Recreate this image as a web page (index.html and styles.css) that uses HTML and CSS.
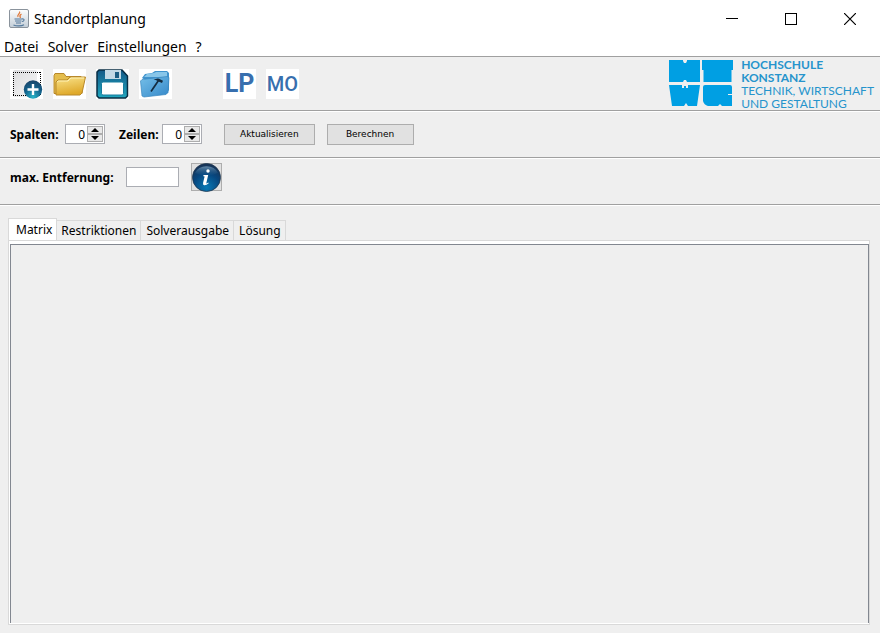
FILE: index.html
```
<!DOCTYPE html>
<html lang="de">
<head>
<meta charset="utf-8">
<title>Standortplanung</title>
<link rel="stylesheet" href="styles.css">
</head>
<body>
<div class="window">
  <header class="titlebar">
    <svg class="app-icon" width="20" height="20" viewBox="0 0 20 20" aria-hidden="true">
      <defs><linearGradient id="java" x1="0" y1="0" x2="0" y2="1"><stop offset="0" stop-color="#fdfdfd"/><stop offset="1" stop-color="#c3ced8"/></linearGradient></defs>
      <rect x=".5" y=".5" width="19" height="18" rx="1.5" fill="url(#java)" stroke="#8a939c"/>
      <path d="M10.500 2.500c1.500 2-3 3-1.500 5.500M12.500 5c-2 1-2 2-1 4" fill="none" stroke="#e07a3c" stroke-width="1.200"/>
      <path d="M5.500 10h7.500M6 12h6.500M7 14h5M4.500 16c3 1.300 8 1.200 10.500-.3M13 10c3-.6 2.500 2.300 0 2.500" fill="none" stroke="#54799c" stroke-width="1.100"/>
    </svg>
    <h1 class="title">Standortplanung</h1>
    <div class="window-controls">
      <button class="control" aria-label="Minimieren"><svg width="12" height="12" viewBox="0 0 12 12"><path d="M0 5.500h12" stroke="#000"/></svg></button>
      <button class="control" aria-label="Maximieren"><svg width="12" height="12" viewBox="0 0 12 12"><rect x=".5" y=".5" width="11" height="11" fill="none" stroke="#000"/></svg></button>
      <button class="control" aria-label="Schließen"><svg width="12" height="12" viewBox="0 0 12 12"><path d="M0 0L12 12M12 0L0 12" stroke="#000" stroke-width="1.200"/></svg></button>
    </div>
  </header>

  <nav class="menu">
    <button class="menu-item">Datei</button>
    <button class="menu-item">Solver</button>
    <button class="menu-item">Einstellungen</button>
    <button class="menu-item">?</button>
  </nav>

  <section class="toolbar">
    <div class="tools">
      <button class="tool" aria-label="Neu">
        <svg width="33" height="30" viewBox="0 0 33 30">
          <defs>
            <linearGradient id="page" x1="0" y1="0" x2="1" y2="1"><stop offset="0" stop-color="#dcdcde"/><stop offset="1" stop-color="#f6f6f6"/></linearGradient>
            <radialGradient id="plus" cx=".5" cy=".9" r=".9"><stop offset="0" stop-color="#28b4c8"/><stop offset=".55" stop-color="#13628c"/><stop offset="1" stop-color="#1b4468"/></radialGradient>
          </defs>
          <rect x="3" y="1" width="24" height="27" rx="2" fill="url(#page)"/>
          <g fill="none" stroke="#000" stroke-dasharray="1 1" shape-rendering="crispEdges">
            <path d="M3 3.500h28M3 26.500h28"/>
            <path d="M3.500 3v24M30.500 3v24"/>
          </g>
          <circle cx="23" cy="20.500" r="9.200" fill="url(#plus)"/>
          <path d="M23 15v11M17.500 20.500h11" stroke="#fff" stroke-width="2.400"/>
        </svg>
      </button>
      <button class="tool" aria-label="Öffnen">
        <svg width="33" height="30" viewBox="0 0 33 30">
          <defs><linearGradient id="folder" x1="0" y1="0" x2=".3" y2="1"><stop offset="0" stop-color="#fae48c"/><stop offset="1" stop-color="#dfa92a"/></linearGradient></defs>
          <path d="M1 24.500V6.500l1-2h9l2 3h15l1 2v15z" fill="#e4bd4d" stroke="#b8882a"/>
          <path d="M3 26L3 13l2-2h9l3-3h15.500L29 24l-2 2z" fill="url(#folder)" stroke="#b8882a"/>
          <path d="M4 13l1.500-1H15l3-3h13" fill="none" stroke="#fff2b4"/>
        </svg>
      </button>
      <button class="tool" aria-label="Speichern">
        <svg width="33" height="30" viewBox="0 0 33 30">
          <defs><linearGradient id="disk" x1="0" y1="0" x2="0" y2="1"><stop offset="0" stop-color="#125988"/><stop offset="1" stop-color="#20a8bf"/></linearGradient></defs>
          <path d="M1 3l2-2h23l5.500 6v20l-2 2H3l-2-2z" fill="url(#disk)" stroke="#082d43" stroke-width="1.500"/>
          <rect x="9" y="1" width="16" height="9" fill="#c3d9e6"/>
          <rect x="19" y="3" width="4" height="6" fill="#1c5d83"/>
          <rect x="5.500" y="13" width="22" height="13" rx="1.500" fill="#fff" stroke="#167c9e"/>
        </svg>
      </button>
      <button class="tool" aria-label="Werkzeuge">
        <svg width="33" height="30" viewBox="0 0 33 30">
          <defs><linearGradient id="blue" x1="0" y1="0" x2="1" y2="1"><stop offset="0" stop-color="#75bfe8"/><stop offset="1" stop-color="#3588c9"/></linearGradient></defs>
          <path d="M3 9l3-4 7-1 3-2 12 0 2 2v17l-3 4z" fill="#3f93cd"/>
          <path d="M5 8l3-3 7-1 2-1h11v5z" fill="#88c6e9"/>
          <path d="M1.500 12l1.500-1.500 25-3 2 1-1 15-2 2L5 28l-2-1z" fill="url(#blue)" stroke="#3a87bf" stroke-width=".7"/>
          <path d="M12 22.500l7.500-11" stroke="#142c40" stroke-width="1.700"/>
          <path d="M14.500 11c2.500-1.500 5-2 7-.5l2.500 1.300-1 2.200-3.500-1.500c-1-1-3-1.800-5-1.500z" fill="#142c40"/>
        </svg>
      </button>
      <button class="tool letters first">LP</button>
      <button class="tool letters small">MO</button>
    </div>
    <div class="brand">
      <svg width="64" height="47" viewBox="0 0 64 47" aria-hidden="true">
        <g fill="#009fe3">
          <path d="M0 0h14v1l1 2h2l1-2V0h13v22H18l-1-2h-2l-1 2H0z"/>
          <path d="M33 0h31v10h-1.500v12h-28V10H33z"/>
          <path d="M0 25h13v3h2v-2h2v2h2v-3h12l-3 21h-9l-2-3-2 3H3z"/>
          <path d="M36 25h25q2 0 2 2v7h-4v1h4v11H53l-2-2-2 2H39q-4-1-5-5V27q0-2 2-2z"/>
        </g>
      </svg>
      <p class="brand-text"><strong>HOCHSCHULE<br>KONSTANZ</strong><br>TECHNIK, WIRTSCHAFT<br>UND GESTALTUNG</p>
    </div>
  </section>

  <section class="row">
    <label class="label" for="cols">Spalten:</label>
    <div class="spinner">
      <input id="cols" type="number" value="0">
      <div class="steps">
        <button aria-label="Spalten erhöhen"><svg width="8" height="4" viewBox="0 0 8 4"><path d="M0 4L4 0l4 4z"/></svg></button>
        <button aria-label="Spalten verringern"><svg width="8" height="4" viewBox="0 0 8 4"><path d="M0 0h8L4 4z"/></svg></button>
      </div>
    </div>
    <label class="label second" for="rows">Zeilen:</label>
    <div class="spinner">
      <input id="rows" type="number" value="0">
      <div class="steps">
        <button aria-label="Zeilen erhöhen"><svg width="8" height="4" viewBox="0 0 8 4"><path d="M0 4L4 0l4 4z"/></svg></button>
        <button aria-label="Zeilen verringern"><svg width="8" height="4" viewBox="0 0 8 4"><path d="M0 0h8L4 4z"/></svg></button>
      </div>
    </div>
    <div class="actions">
      <button class="action">Aktualisieren</button>
      <button class="action">Berechnen</button>
    </div>
  </section>

  <section class="row distance-row">
    <label class="label distance-label" for="distance">max. Entfernung:</label>
    <input class="distance" id="distance" type="text">
    <button class="info" aria-label="Information">
      <svg width="29" height="29" viewBox="0 0 29 29">
        <defs>
          <radialGradient id="info" cx=".5" cy=".85" r=".8"><stop offset="0" stop-color="#0879b5"/><stop offset=".6" stop-color="#07477f"/><stop offset="1" stop-color="#173458"/></radialGradient>
          <linearGradient id="shine" x1="0" y1="0" x2="0" y2="1"><stop offset="0" stop-color="#a9cde3"/><stop offset="1" stop-color="#2a6a9c" stop-opacity=".1"/></linearGradient>
        </defs>
        <circle cx="14.500" cy="14.500" r="14" fill="url(#info)" stroke="#21374f" stroke-width=".8"/>
        <path d="M3 10a12.500 11 0 0 1 23 0q-11.500 5-23 0z" fill="url(#shine)" opacity=".55"/>
        <circle cx="16" cy="8" r="1.700" fill="#fff"/>
        <path d="M11.500 12h4.700l-2 8.500q1 0 2-1l.5.800q-2.500 2.300-4.500 2-1.700-.3-1.100-2.500l1.500-6.300q-.6-.4-1.300-.2z" fill="#fff"/>
      </svg>
    </button>
  </section>

  <main class="content">
    <div class="tabs" role="tablist">
      <button class="tab active" role="tab" aria-selected="true">Matrix</button>
      <button class="tab" role="tab" aria-selected="false">Restriktionen</button>
      <button class="tab" role="tab" aria-selected="false">Solverausgabe</button>
      <button class="tab" role="tab" aria-selected="false">Lösung</button>
    </div>
    <div class="pane" role="tabpanel" aria-label="Matrix"><div class="matrix"></div></div>
  </main>
</div>
</body>
</html>
```

FILE: styles.css
```
* { box-sizing: border-box; }

body {
  margin: 0;
  background: #efefef;
  color: #000;
  font-family: "Noto Sans", sans-serif;
  font-size: 12px;
}

button, input { font: inherit; color: inherit; margin: 0; padding: 0; border-radius: 0; }
button { border: 0; background: none; }
svg { display: block; flex: none; }

.window { display: flex; flex-direction: column; min-height: 100vh; }

.titlebar { display: flex; align-items: center; height: 37px; padding: 0 1px 0 9px; background: #fff; }
.title { margin: 0 0 0 5px; font-size: 14px; font-weight: 400; line-height: 20px; }
.window-controls { display: flex; margin-left: auto; }
.control { display: flex; align-items: center; justify-content: center; width: 59px; height: 36px; }

.menu {
  display: flex;
  gap: 9px;
  height: 20px;
  padding-left: 4px;
  background: #fff;
  border-bottom: 1px solid #a0a0a0;
}
.menu-item { font-size: 14px; line-height: 20px; }

.toolbar {
  display: flex;
  align-items: center;
  justify-content: space-between;
  height: 54px;
  padding: 0 6px 0 10px;
  border-bottom: 1px solid #a0a0a0;
}
.tools { display: flex; gap: 10px; }
.tool { display: flex; align-items: center; justify-content: center; width: 33px; height: 30px; background: #fff; }
.letters { color: #386fae; font-family: Roboto, sans-serif; font-weight: 700; font-size: 25px; line-height: 30px; }
.letters.first { margin-left: 41px; }
.letters.small { font-size: 20px; font-weight: 500; }

.brand { display: flex; align-items: center; gap: 8px; }
.brand-text { margin: 0; color: #2694cc; font-family: Lato, sans-serif; font-size: 12px; line-height: 13px; white-space: nowrap; }

.row {
  display: flex;
  align-items: center;
  height: 47px;
  padding: 0 10px 1px;
  border-top: 1px solid #fff;
  border-bottom: 1px solid #a0a0a0;
}
.distance-row { padding-bottom: 9px; }
.label { font-weight: 700; width: 55px; }
.label.second { margin-left: 14px; width: 43px; }
.label.distance-label { width: 116px; }

.spinner { display: flex; width: 40px; height: 20px; padding: 1px; border: 1px solid #abadb3; background: #fff; }
.spinner input { flex: 1; min-width: 0; padding-right: 2px; border: 0; text-align: right; appearance: textfield; }
.spinner input::-webkit-inner-spin-button { appearance: none; }
.steps { display: flex; flex-direction: column; width: 16px; }
.steps button { display: flex; flex: 1; align-items: center; justify-content: center; border: 1px solid #adadad; background: #e8e8e8; }

.actions { display: flex; gap: 12px; margin-left: 22px; }
.action { min-width: 87px; height: 21px; padding: 0 15px; border: 1px solid #adadad; background: #e1e1e1; font-family: "DejaVu Sans", sans-serif; font-size: 9px; }

.distance { width: 53px; height: 20px; border: 1px solid #abadb3; background: #fff; }
.info { display: flex; align-items: center; justify-content: center; width: 31px; height: 28px; margin-left: 12px; border: 1px solid #adadad; background: #e1e1e1; }

.content { display: flex; flex: 1; flex-direction: column; padding: 12px 10px 8px 8px; border-top: 1px solid #fff; }
.tabs { display: flex; align-items: flex-end; height: 22px; }
.tab { height: 20px; padding: 0 4px; border: 1px solid #d9d9d9; border-width: 1px 1px 0 0; line-height: 20px; }
.tab.active { height: 22px; padding: 0 4px 0 7px; border-left-width: 1px; background: #fff; }
.tab:not(.active) ~ .tab { padding-left: 5px; }
.pane { display: flex; flex: 1; padding: 3px 0 1px 1px; border: 1px solid #d9d9d9; background: #fff; }
.matrix { flex: 1; border: 1px solid #828790; border-bottom: 0; background: #efefef; }
```
